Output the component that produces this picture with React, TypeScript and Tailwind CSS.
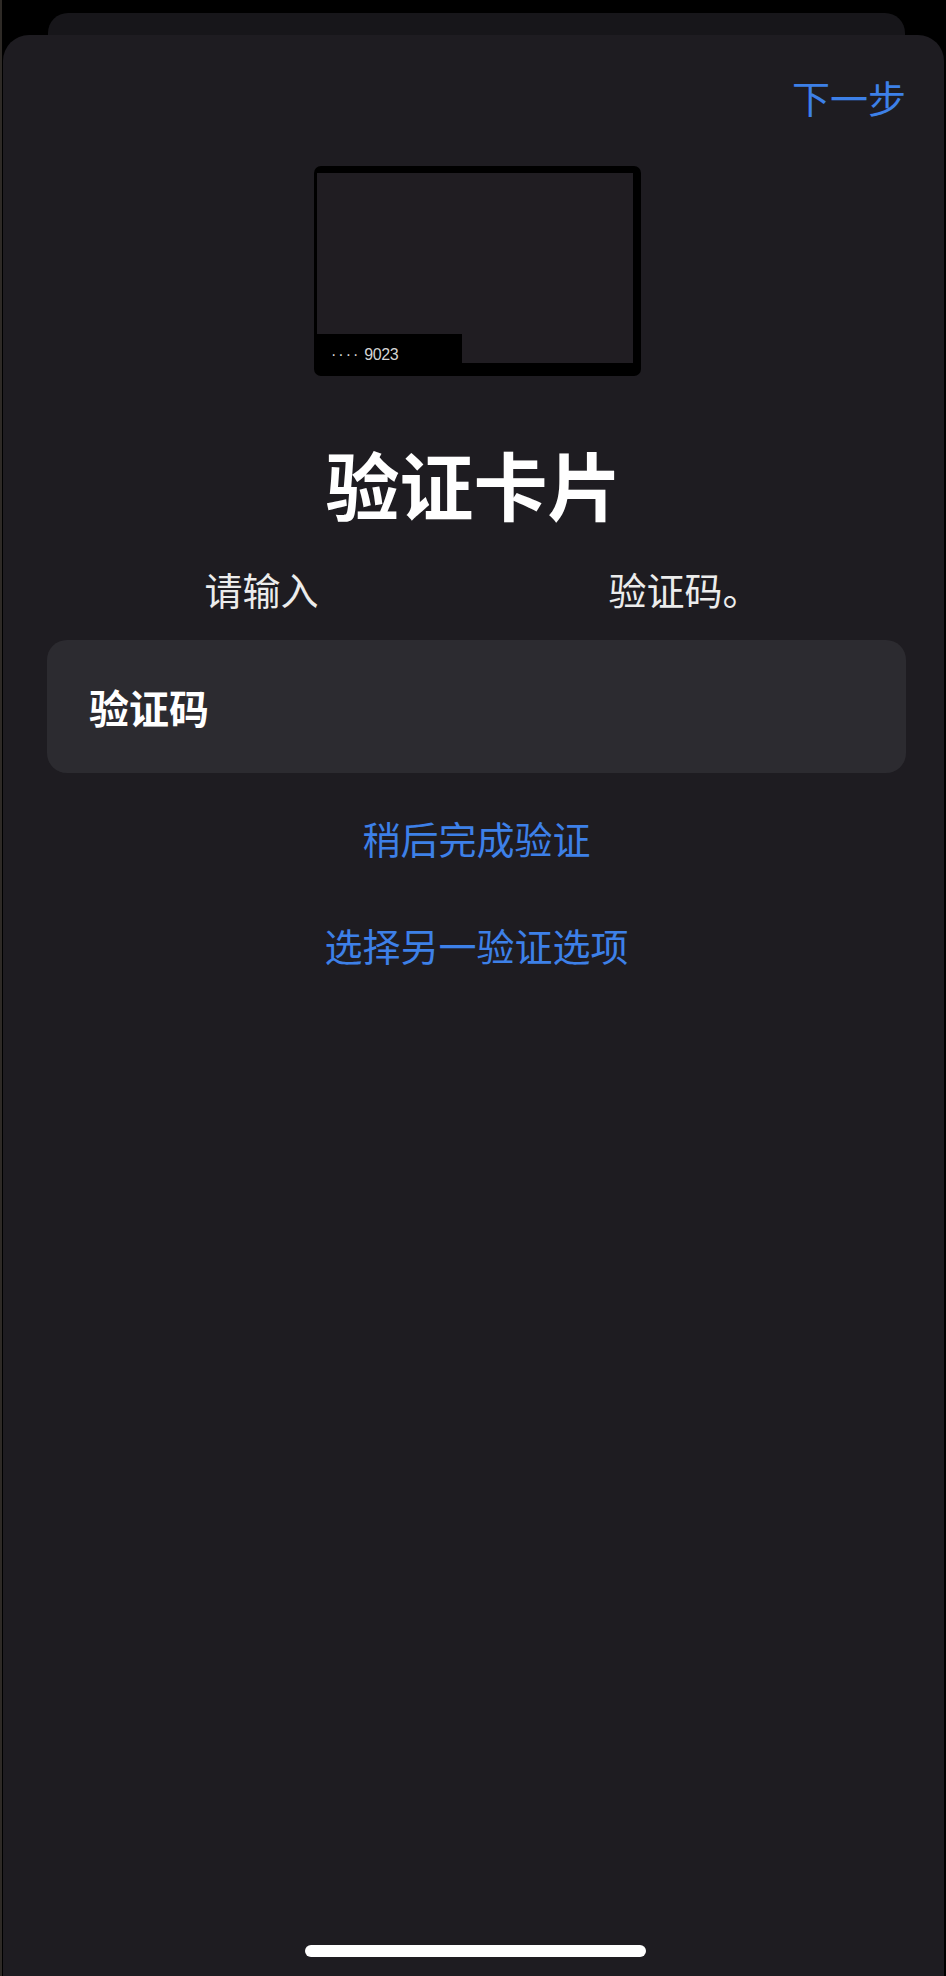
import React from 'react';

const cjk = { fontFamily: '"Noto Sans CJK SC", "Noto Sans", sans-serif' };

function CardThumb() {
  return (
    <div className="flex justify-center pl-[8px] mt-[50px]">
      <div className="relative w-[327px] h-[210px] bg-black rounded-[7px] pt-[7px] pl-[3px] pr-[8px] pb-[13px]">
        <div className="w-full h-full bg-[#201d22]" />
        <div className="absolute left-[3px] bottom-0 w-[145px] h-[42px] bg-black rounded-bl-[7px] flex items-center pl-[14px]">
          <span
            className="text-[16px] leading-none text-[#d4d4d4] tracking-tight"
            style={{ fontFamily: '"Liberation Sans", Arial, sans-serif' }}
          >
            <span className="tracking-[2px] mr-[4px]">····</span>9023
          </span>
        </div>
      </div>
    </div>
  );
}

export default function App() {
  return (
    <div className="w-full h-[1976px] bg-black border-l-[2px] border-[#2e2a26] flex flex-col overflow-hidden" style={cjk}>
      <div className="pt-[13px]">
        <div className="ml-[46px] mr-[41px] h-[22px] bg-[#17161a] rounded-t-[20px]" />
      </div>
      <div className="flex-1 ml-[1px] mr-[2px] bg-[#1e1c21] rounded-t-[26px] flex flex-col">
        <div className="flex justify-end pr-[38px] pt-[43px]">
          <button className="text-[38px] leading-none text-[#3d80e8]">下一步</button>
        </div>

        <CardThumb />

        <h1 className="mt-[70px] text-center text-[74px] leading-none font-bold text-white">验证卡片</h1>

        <p className="mt-[50px] text-center text-[38px] leading-none text-[#ececec] pl-[18px]">
          请输入<span className="inline-block w-[290px]" />验证码。
        </p>

        <div className="mt-[32px] ml-[44px] mr-[38px] h-[133px] bg-[#2c2b30] rounded-[20px] flex items-center pl-[42px]">
          <span className="text-[40px] leading-none font-semibold text-white">验证码</span>
        </div>

        <div className="mt-[46px] text-center pl-[6px]">
          <button className="text-[38px] leading-none text-[#3d80e8]">稍后完成验证</button>
        </div>
        <div className="mt-[67px] text-center pl-[6px]">
          <button className="text-[38px] leading-none text-[#3d80e8]">选择另一验证选项</button>
        </div>

        <div className="mt-auto mb-[19px] flex justify-center pl-[3px]">
          <div className="w-[341px] h-[12px] rounded-full bg-white" />
        </div>
      </div>
    </div>
  );
}
